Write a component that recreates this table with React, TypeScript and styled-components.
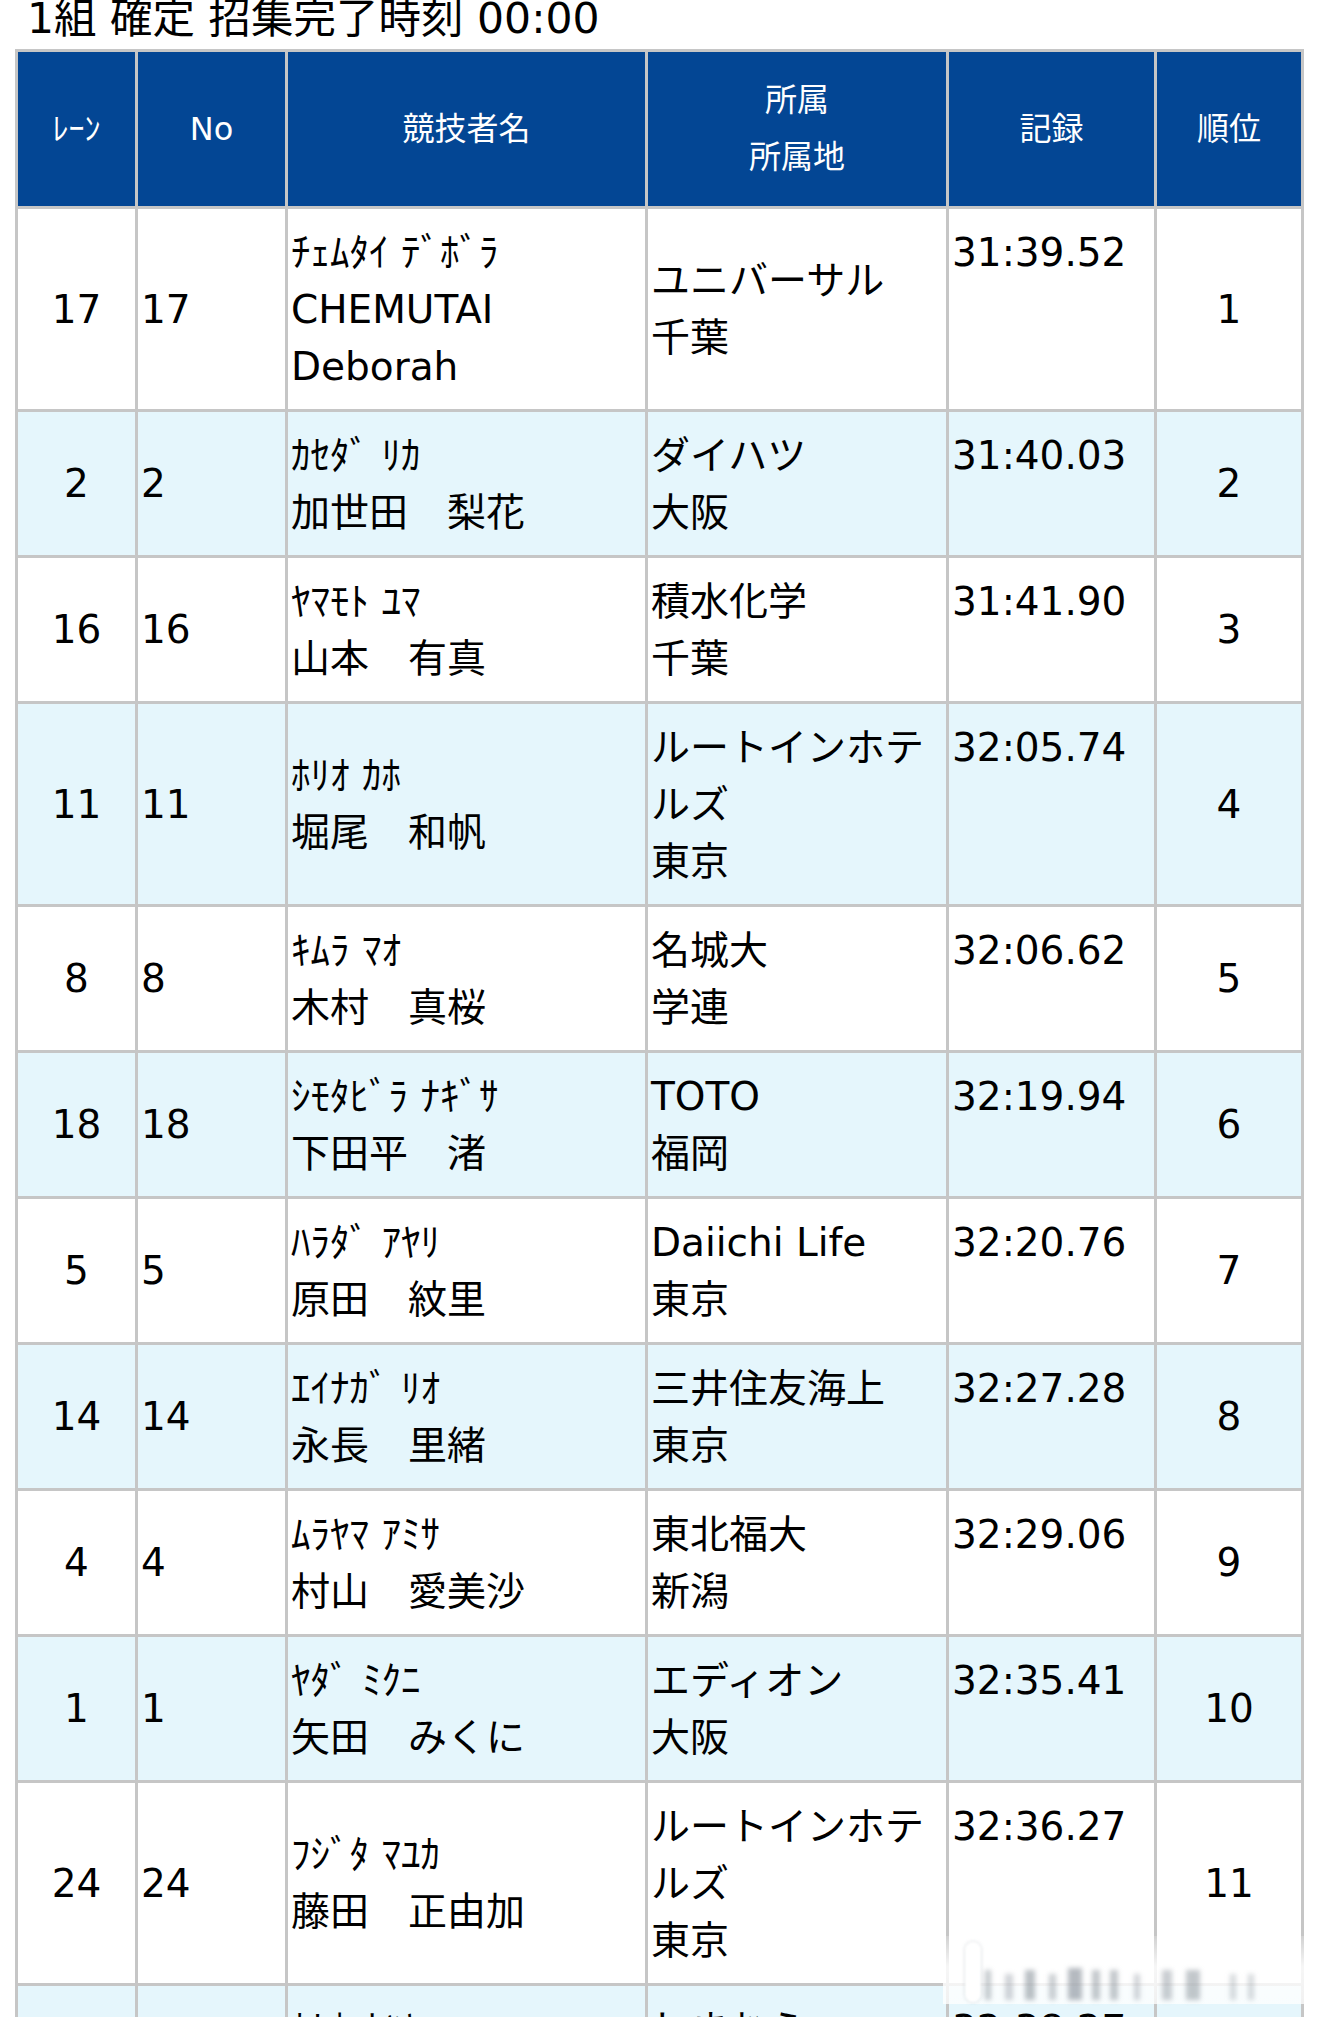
import React from "react";
import styled, { createGlobalStyle } from "styled-components";

const GlobalStyle = createGlobalStyle`
  html, body {
    margin: 0;
    padding: 0;
    background: #ffffff;
  }
  body {
    font-family: "DejaVu Sans", "Noto Sans CJK JP", sans-serif;
    color: #000000;
  }
`;

const BORDER = "#c6c6c6";

const Page = styled.div`
  position: relative;
  padding: 0 16px 60px 15px;
  overflow: hidden;
`;

const Title = styled.h3`
  margin: -3px 0 8px;
  padding-left: 12px;
  font-size: 42.5px;
  line-height: 44px;
  font-weight: 400;
  white-space: nowrap;
`;

const Table = styled.div`
  display: grid;
  grid-template-columns: 120px 150px 360px 301px 208px 147px;
  width: 1289px;
  box-sizing: border-box;
  border-left: 3px solid ${BORDER};
  border-top: 3px solid ${BORDER};
`;

const Row = styled.div`
  display: contents;
`;

const HeadCell = styled.div`
  box-sizing: border-box;
  border-right: 3px solid ${BORDER};
  border-bottom: 3px solid ${BORDER};
  background: #034694;
  color: #ffffff;
  font-size: 32px;
  line-height: 57px;
  padding: 20px 3px;
  display: flex;
  flex-direction: column;
  justify-content: center;
  align-items: center;
  text-align: center;
`;

const Cell = styled.div<{ $center?: boolean; $top?: boolean; $stripe?: boolean }>`
  box-sizing: border-box;
  border-right: 3px solid ${BORDER};
  border-bottom: 3px solid ${BORDER};
  background: ${(p) => (p.$stripe ? "#e5f6fc" : "#ffffff")};
  font-size: 39px;
  line-height: 57px;
  padding: 14.5px 3px;
  display: flex;
  flex-direction: column;
  justify-content: ${(p) => (p.$top ? "flex-start" : "center")};
  text-align: ${(p) => (p.$center ? "center" : "left")};
  min-width: 0;
`;

const Line = styled.div`
  display: block;
`;

const Watermark = styled.div`
  position: absolute;
  left: 943px;
  top: 1936px;
  width: 377px;
  height: 68px;
  pointer-events: none;
  background: linear-gradient(
    to bottom,
    rgba(255, 255, 255, 0.2) 0%,
    rgba(255, 255, 255, 0.85) 45%,
    rgba(255, 255, 255, 0.75) 100%
  );
  display: flex;
  align-items: flex-end;
  padding: 0 0 4px 26px;
  box-sizing: border-box;
`;

const Capsule = styled.span`
  position: absolute;
  left: 22px;
  top: 6px;
  width: 16px;
  height: 60px;
  border-radius: 8px;
  background: rgba(255, 255, 255, 0.95);
  box-shadow: 0 0 3px rgba(150, 160, 170, 0.6);
  filter: blur(1px);
`;

const Bar = styled.span<{ $w: number; $h: number; $o: number; $gap: number }>`
  display: block;
  width: ${(p) => p.$w}px;
  height: ${(p) => p.$h}px;
  margin-left: ${(p) => p.$gap}px;
  background: rgba(120, 130, 140, ${(p) => p.$o});
  filter: blur(2.5px);
`;

type Athlete = {
  lane: string;
  no: string;
  name: string[];
  team: string[];
  record: string;
  rank: string;
};

const athletes: Athlete[] = [
  { lane: "17", no: "17", name: ["ﾁｪﾑﾀｲ ﾃﾞﾎﾞﾗ", "CHEMUTAI", "Deborah"], team: ["ユニバーサル", "千葉"], record: "31:39.52", rank: "1" },
  { lane: "2", no: "2", name: ["ｶｾﾀﾞ ﾘｶ", "加世田　梨花"], team: ["ダイハツ", "大阪"], record: "31:40.03", rank: "2" },
  { lane: "16", no: "16", name: ["ﾔﾏﾓﾄ ﾕﾏ", "山本　有真"], team: ["積水化学", "千葉"], record: "31:41.90", rank: "3" },
  { lane: "11", no: "11", name: ["ﾎﾘｵ ｶﾎ", "堀尾　和帆"], team: ["ルートインホテルズ", "東京"], record: "32:05.74", rank: "4" },
  { lane: "8", no: "8", name: ["ｷﾑﾗ ﾏｵ", "木村　真桜"], team: ["名城大", "学連"], record: "32:06.62", rank: "5" },
  { lane: "18", no: "18", name: ["ｼﾓﾀﾋﾞﾗ ﾅｷﾞｻ", "下田平　渚"], team: ["TOTO", "福岡"], record: "32:19.94", rank: "6" },
  { lane: "5", no: "5", name: ["ﾊﾗﾀﾞ ｱﾔﾘ", "原田　紋里"], team: ["Daiichi Life", "東京"], record: "32:20.76", rank: "7" },
  { lane: "14", no: "14", name: ["ｴｲﾅｶﾞ ﾘｵ", "永長　里緒"], team: ["三井住友海上", "東京"], record: "32:27.28", rank: "8" },
  { lane: "4", no: "4", name: ["ﾑﾗﾔﾏ ｱﾐｻ", "村山　愛美沙"], team: ["東北福大", "新潟"], record: "32:29.06", rank: "9" },
  { lane: "1", no: "1", name: ["ﾔﾀﾞ ﾐｸﾆ", "矢田　みくに"], team: ["エディオン", "大阪"], record: "32:35.41", rank: "10" },
  { lane: "24", no: "24", name: ["ﾌｼﾞﾀ ﾏﾕｶ", "藤田　正由加"], team: ["ルートインホテルズ", "東京"], record: "32:36.27", rank: "11" },
  { lane: "9", no: "9", name: ["ｶﾄｳ ﾅﾂｷ", "加藤　夏樹"], team: ["しまむら", "埼玉"], record: "32:38.27", rank: "12" },
];

const bars = [
  { w: 6, h: 30, o: 0.45, g: 16 },
  { w: 8, h: 26, o: 0.35, g: 14 },
  { w: 10, h: 30, o: 0.5, g: 12 },
  { w: 7, h: 26, o: 0.4, g: 14 },
  { w: 14, h: 32, o: 0.55, g: 12 },
  { w: 8, h: 30, o: 0.45, g: 10 },
  { w: 8, h: 30, o: 0.45, g: 10 },
  { w: 6, h: 26, o: 0.35, g: 16 },
  { w: 10, h: 30, o: 0.4, g: 22 },
  { w: 14, h: 30, o: 0.45, g: 14 },
  { w: 6, h: 26, o: 0.3, g: 30 },
  { w: 6, h: 26, o: 0.3, g: 12 },
];

export default function App() {
  return (
    <Page>
      <GlobalStyle />
      <Title>1組 確定 招集完了時刻 00:00</Title>
      <Table>
        <Row>
          <HeadCell>ﾚｰﾝ</HeadCell>
          <HeadCell>No</HeadCell>
          <HeadCell>競技者名</HeadCell>
          <HeadCell>
            <Line>所属</Line>
            <Line>所属地</Line>
          </HeadCell>
          <HeadCell>記録</HeadCell>
          <HeadCell>順位</HeadCell>
        </Row>
        {athletes.map((a, i) => {
          const stripe = i % 2 === 1;
          return (
            <Row key={i}>
              <Cell $center $stripe={stripe}>{a.lane}</Cell>
              <Cell $stripe={stripe}>{a.no}</Cell>
              <Cell $stripe={stripe}>
                {a.name.map((n, j) => (
                  <Line key={j}>{n}</Line>
                ))}
              </Cell>
              <Cell $stripe={stripe}>
                {a.team.map((t, j) => (
                  <Line key={j}>{t}</Line>
                ))}
              </Cell>
              <Cell $top $stripe={stripe}>{a.record}</Cell>
              <Cell $center $stripe={stripe}>{a.rank}</Cell>
            </Row>
          );
        })}
      </Table>
      <Watermark>
        <Capsule />
        {bars.map((b, i) => (
          <Bar key={i} $w={b.w} $h={b.h} $o={b.o} $gap={b.g} />
        ))}
      </Watermark>
    </Page>
  );
}
